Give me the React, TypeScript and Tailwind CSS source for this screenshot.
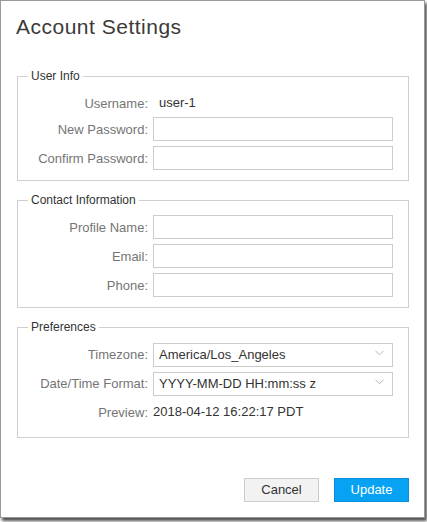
import React from 'react'

const labelCls = 'text-right text-[13px] text-[#757575] leading-[15px] self-center whitespace-nowrap'
const inputCls =
  'h-[24px] w-[240px] border border-[#ccc] bg-white px-[5px] text-[13px] text-[#333] outline-none'

function Chevron() {
  return (
    <svg
      className="pointer-events-none absolute right-[9px] top-[8px]"
      width="9"
      height="6"
      viewBox="0 0 9 6"
      fill="none"
    >
      <polyline points="0.5,0.8 4.5,4.8 8.5,0.8" stroke="#b5b5b5" strokeWidth="1" />
    </svg>
  )
}

function SelectBox({ value }: { value: string }) {
  return (
    <div className="relative h-[24px] w-[240px]">
      <select
        defaultValue={value}
        className="h-[24px] w-[240px] appearance-none border border-[#ccc] bg-white pl-[5px] pr-[20px] text-[13px] text-[#333] outline-none"
      >
        <option value={value}>{value}</option>
      </select>
      <Chevron />
    </div>
  )
}

function Section({
  title,
  children,
  className = '',
}: {
  title: string
  children: React.ReactNode
  className?: string
}) {
  return (
    <fieldset className={`ml-[16px] w-[392px] border border-[#cfcfcf] px-0 pt-[8px] ${className}`}>
      <legend className="ml-[10px] px-[3px] text-[12px] leading-[14px] text-[#333]">{title}</legend>
      <div className="grid grid-cols-[130px_240px] gap-x-[5px] gap-y-[5px]">{children}</div>
    </fieldset>
  )
}

export default function App() {
  return (
    <div
      className="h-[522px] w-[427px] bg-white"
      style={{ fontFamily: '"Liberation Sans", Arial, sans-serif' }}
    >
      <div className="flex h-[518px] w-[425px] flex-col border border-[#9a9a9a] bg-white shadow-[2px_3px_3px_rgba(0,0,0,0.7)]">
        <h1 className="pl-[15px] pt-[14px] text-[21px] font-normal leading-[24px] tracking-[0.5px] text-[#3a3a3a]">
          Account Settings
        </h1>

        <Section title="User Info" className="mt-[30px] pb-[10px]">
          <div className={`${labelCls} -mb-[3px]`}>Username:</div>
          <div className="-mb-[3px] flex h-[24px] items-center pl-[6px] text-[13px] text-[#333]">user-1</div>
          <div className={labelCls}>New Password:</div>
          <input type="password" className={inputCls} />
          <div className={labelCls}>Confirm Password:</div>
          <input type="password" className={inputCls} />
        </Section>

        <Section title="Contact Information" className="mt-[12px] pb-[10px]">
          <div className={labelCls}>Profile Name:</div>
          <input type="text" className={inputCls} />
          <div className={labelCls}>Email:</div>
          <input type="text" className={inputCls} />
          <div className={labelCls}>Phone:</div>
          <input type="text" className={inputCls} />
        </Section>

        <Section title="Preferences" className="mt-[12px] pb-[13px]">
          <div className={labelCls}>Timezone:</div>
          <SelectBox value="America/Los_Angeles" />
          <div className={labelCls}>Date/Time Format:</div>
          <SelectBox value="YYYY-MM-DD HH:mm:ss z" />
          <div className={labelCls}>Preview:</div>
          <div className="flex h-[24px] items-center text-[13px] text-[#333]">
            2018-04-12 16:22:17 PDT
          </div>
        </Section>

        <div className="mt-auto flex justify-end gap-[15px] pb-[15px] pr-[15px]">
          <button className="h-[24px] w-[75px] border border-[#ccc] bg-[#f2f2f2] text-[13px] text-[#333]">
            Cancel
          </button>
          <button className="h-[24px] w-[75px] border border-[#0b8fdc] bg-[#08a2f5] text-[13px] text-white">
            Update
          </button>
        </div>
      </div>
    </div>
  )
}
